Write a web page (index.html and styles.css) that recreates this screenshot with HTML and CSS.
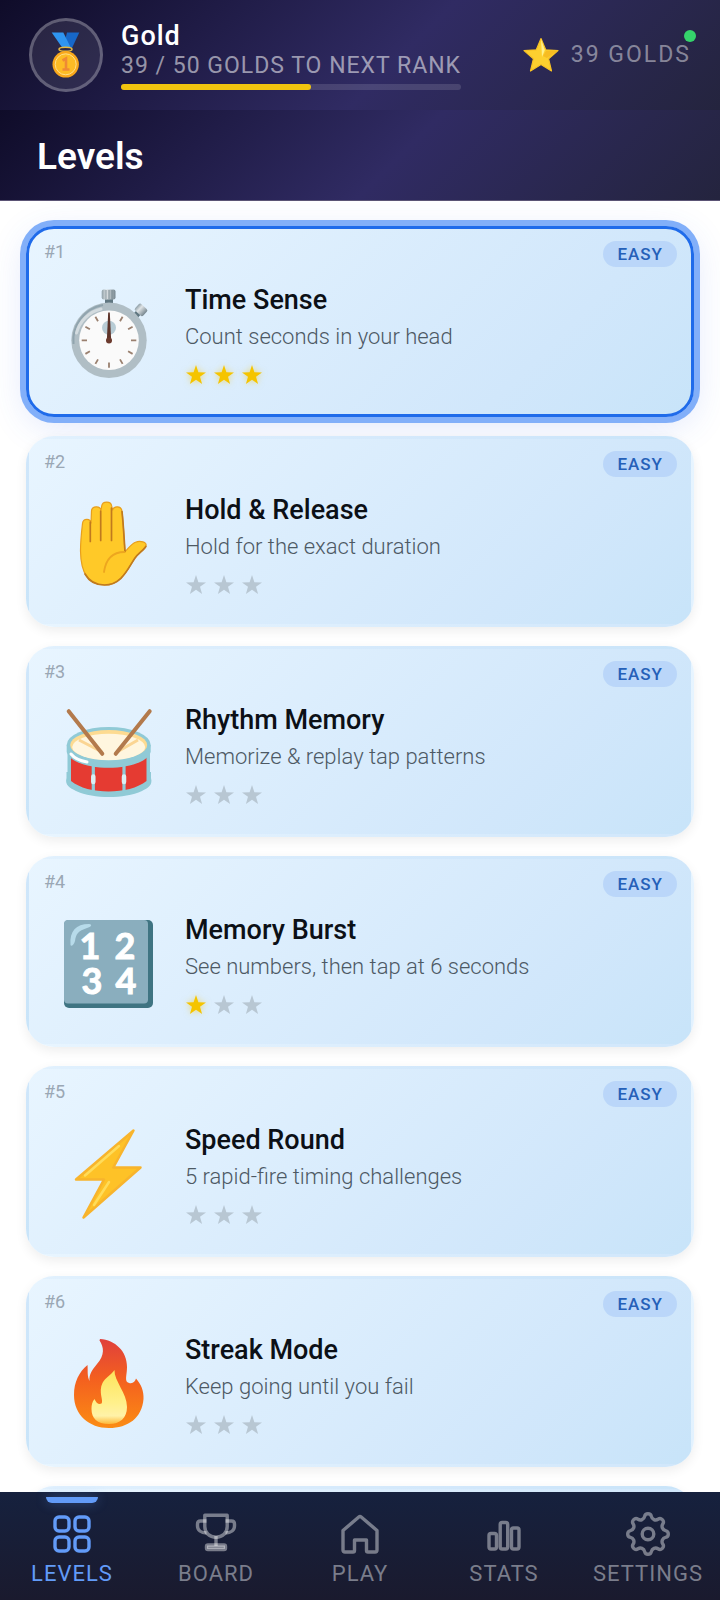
FILE: index.html
```html
<!DOCTYPE html>
<html lang="en">
<head>
<meta charset="utf-8">
<meta name="viewport" content="width=device-width, initial-scale=1">
<title>Levels</title>
<link rel="stylesheet" href="styles.css">
</head>
<body>
<svg class="defs" aria-hidden="true">
  <defs>
    <symbol id="star" viewBox="0 0 20 20"><path d="M10 0 12.400 7.200 20 7.400 14 11.800 16.100 19 10 14.800 3.900 19 6 11.800 0 7.400 7.600 7.200Z"/></symbol>
    <linearGradient id="flame" x1="0" y1="0" x2="0" y2="1"><stop offset="0" stop-color="#e0403c"/><stop offset=".45" stop-color="#f4601f"/><stop offset="1" stop-color="#fb8c14"/></linearGradient>
    <linearGradient id="core" x1="0" y1="0" x2="0" y2="1"><stop offset="0" stop-color="#fde35b"/><stop offset=".6" stop-color="#fff08a"/><stop offset=".85" stop-color="#fff2a8"/><stop offset="1" stop-color="#fdb93a"/></linearGradient>
    <linearGradient id="steel" x1="0" y1="0" x2="1" y2="0"><stop offset="0" stop-color="#8fa0a8"/><stop offset=".35" stop-color="#e0e4e6"/><stop offset="1" stop-color="#76868f"/></linearGradient>
  </defs>
</svg>

<header class="topbar">
  <div class="avatar">
    <svg width="46" height="46" viewBox="0 0 46 46" aria-hidden="true">
      <path d="M24 .5H36.3L29 16H20Z" fill="#1767c8"/>
      <path d="M8.7.5H20.3L28 16H19.5Z" fill="#2f95f0"/>
      <ellipse cx="22.5" cy="17.3" rx="6.5" ry="2" fill="none" stroke="#e9b93f" stroke-width="1.5"/>
      <circle cx="22.7" cy="32.3" r="13.2" fill="#f9a81b"/>
      <circle cx="22.7" cy="32.3" r="10.5" fill="#fdbc25" stroke="#ffe08a" stroke-width="1"/>
      <path d="M19.5 28.5 23 26.5V37M19.5 37.5H26.5" fill="none" stroke="#ee8a35" stroke-width="2.6"/>
    </svg>
  </div>
  <div class="rank">
    <strong class="rank-name">Gold</strong>
    <span class="rank-next" id="rank-next">39 / 50 GOLDS TO NEXT RANK</span>
    <div class="track" role="progressbar" aria-labelledby="rank-next" aria-valuenow="39" aria-valuemin="0" aria-valuemax="50"><div class="fill" style="width:56%"></div></div>
  </div>
  <div class="golds">
    <svg width="36" height="36" viewBox="0 0 36 36" aria-hidden="true">
      <path d="M18 1.5 22.7 12.8 35 13.6 25.6 21.8 28.5 34 18 27.6 7.5 34 10.4 21.8 1 13.6 13.3 12.8Z" fill="#fdd02f" stroke="#f9c324" stroke-width="1.2" stroke-linejoin="round"/>
      <path d="M18 2 21.8 13 19 20Z" fill="#fff08c"/><path d="M34 14 24 21 20 19 23 14Z" fill="#f2ac17" opacity=".55"/>
    </svg>
    <span>39 GOLDS</span>
    <i class="dot"></i>
  </div>
</header>

<div class="titlebar"><h1>Levels</h1></div>

<main class="scroll">
  <ol class="levels">
    <li><a class="card selected" href="#1" aria-current="true">
      <span class="card-top"><span class="num">#1</span><span class="badge">EASY</span></span>
      <span class="card-body">
        <svg class="art" viewBox="0 0 90 90" aria-hidden="true">
          <path d="M42 9H50V16H42Z" fill="#5f7680"/>
          <rect x="38.7" y=".5" width="13.8" height="10" rx="2" fill="url(#steel)"/>
          <path d="M43 1V10M46 1V10M49 1V10" stroke="#71838c" stroke-width=".8"/>
          <g transform="rotate(43 77 22)"><rect x="74" y="24" width="6" height="7" fill="#5f7680"/><rect x="71.5" y="16" width="11" height="9" rx="2" fill="url(#steel)"/></g>
          <circle cx="46" cy="51.3" r="37.7" fill="#b0bec5"/>
          <path d="M10.5 55A36 36 0 0 1 40 16" fill="none" stroke="#90a4ae" stroke-width="2"/>
          <path d="M13.5 44A33 33 0 0 1 38 20" fill="none" stroke="#d3dbdf" stroke-width="3" stroke-linecap="round"/>
          <circle cx="46" cy="51.3" r="29.8" fill="#fafafa"/>
          <circle cx="46" cy="38.7" r="7" fill="#b8ccd5"/>
          <g stroke="#9a806f" stroke-width="1.8">
            <path d="M46 73.5V78.8M18.7 51.3H24M68 51.3H73.3"/>
            <path d="M32.4 27.7 35 32.2M22.4 37.7 26.9 40.3M59.6 27.7 57 32.2M69.6 37.7 65.1 40.3M22.4 64.9 26.9 62.3M32.4 74.9 35 70.4M69.6 64.9 65.1 62.3M59.6 74.9 57 70.4"/>
          </g>
          <path d="M45.2 23.5H46.8L48.2 52H43.8Z" fill="#5d3329"/><circle cx="46" cy="51.5" r="3" fill="#6b3a2e"/>
        </svg>
        <span class="info">
          <strong class="name">Time Sense</strong><span class="desc">Count seconds in your head</span>
          <span class="stars" role="img" aria-label="3 of 3 stars"><svg class="on"><use href="#star"/></svg><svg class="on"><use href="#star"/></svg><svg class="on"><use href="#star"/></svg></span>
        </span>
      </span>
    </a></li>
    <li><a class="card" href="#2">
      <span class="card-top"><span class="num">#2</span><span class="badge">EASY</span></span>
      <span class="card-body">
        <svg class="art" viewBox="0 0 90 90" aria-hidden="true">
          <path d="M17.5 52C17.5 42 18.5 33 19.5 24.5C20 19 27.8 19 28 24.5L28.5 12C28.8 6.5 37.5 6.5 38 11.5L38.7 7C39.5 1.8 48 1.8 48.7 7L49.5 11.5C50.5 6.5 58.5 6.5 59 12.5C60.5 26 61 39 62 52.5C65 50 68 45 72.5 43.2C76.5 41.6 85 42.5 82.7 47.5C81 51 75.5 54 72 59C65 69 59 86 41.5 86C26 86 17.8 75 17.5 52Z" fill="#ffc928" stroke="#e89f1c" stroke-width="1.2"/>
          <path d="M27.3 23V42.5M37.7 12V41.5M48.5 9V41.5M59 12.5C60.5 26 61 39 62 52.5M82.8 47.5C81 51 75.5 54 72 59C65 69 59 86 41.5 86C32 86 26 82 22 75" fill="none" stroke="#c07a1e" stroke-width="1.7" stroke-linecap="round"/>
          <path d="M61.5 53C50 53 43 59 41 73" fill="none" stroke="#eda61f" stroke-width="1.8" stroke-linecap="round"/>
        </svg>
        <span class="info">
          <strong class="name">Hold &amp; Release</strong><span class="desc">Hold for the exact duration</span>
          <span class="stars" role="img" aria-label="0 of 3 stars"><svg><use href="#star"/></svg><svg><use href="#star"/></svg><svg><use href="#star"/></svg></span>
        </span>
      </span>
    </a></li>
    <li><a class="card" href="#3">
      <span class="card-top"><span class="num">#3</span><span class="badge">EASY</span></span>
      <span class="card-body">
        <svg class="art" viewBox="0 0 90 90" aria-hidden="true">
          <path d="M3.5 69C1.500 76 7 79 13 82C31 90 61 90 79 82C85 79 90 76 88 69V63H3.5Z" fill="#90cad6"/>
          <path d="M4.5 38V72C20 88 71 88 87 72V38Z" fill="#90cad6"/>
          <path d="M8 46C26 57 66 57 83.5 46V72C66 86 25 86 8 72Z" fill="#e53b32"/>
          <path d="M30.3 54V83M61 54V83" stroke="#90cad6" stroke-width="3.2"/>
          <path d="M30.3 67.500V73M61 67.500V73" stroke="#d9f0f4" stroke-width="4.500" stroke-linecap="round"/>
          <path d="M3.7 36V43C10 64 81 64 87.7 43V36Z" fill="#90cad6"/>
          <ellipse cx="45.7" cy="36" rx="42" ry="18" fill="#90cad6"/>
          <ellipse cx="45.7" cy="36" rx="38.5" ry="15" fill="#fddb91"/>
          <ellipse cx="45.7" cy="38" rx="36.5" ry="13.2" fill="#fff6df"/>
          <path d="M16 31 39 43M75 31 54 43" stroke="#fbd593" stroke-width="3"/>
          <path d="M8 45C12 50 18 52 24 53" fill="none" stroke="#fff" stroke-width="3" stroke-linecap="round"/>
          <path d="M5.7 2.2 39.3 44.8M86.7 2.2 52.7 44.8" stroke="#b37a4c" stroke-width="4" stroke-linecap="round"/>
        </svg>
        <span class="info">
          <strong class="name">Rhythm Memory</strong><span class="desc">Memorize &amp; replay tap patterns</span>
          <span class="stars" role="img" aria-label="0 of 3 stars"><svg><use href="#star"/></svg><svg><use href="#star"/></svg><svg><use href="#star"/></svg></span>
        </span>
      </span>
    </a></li>
    <li><a class="card" href="#4">
      <span class="card-top"><span class="num">#4</span><span class="badge">EASY</span></span>
      <span class="card-body">
        <svg class="art" viewBox="0 0 90 90" aria-hidden="true">
          <rect x="1" y="1" width="89" height="88" rx="5" fill="#3f7482"/>
          <rect x="1" y="1" width="84" height="83.5" rx="4" fill="#8aaebe"/>
          <path d="M7.500 26C6.500 12 13 5 26 5C30 5.500 28 8 24 9C15 12 13 15 12 22C11 26 8 28 7.500 26Z" fill="#b7dbea"/>
          <g class="digits"><text x="27" y="40">1</text><text x="62" y="40">2</text><text x="29" y="75">3</text><text x="63" y="75">4</text></g>
        </svg>
        <span class="info">
          <strong class="name">Memory Burst</strong><span class="desc">See numbers, then tap at 6 seconds</span>
          <span class="stars" role="img" aria-label="1 of 3 stars"><svg class="on"><use href="#star"/></svg><svg><use href="#star"/></svg><svg><use href="#star"/></svg></span>
        </span>
      </span>
    </a></li>
    <li><a class="card" href="#5">
      <span class="card-top"><span class="num">#5</span><span class="badge">EASY</span></span>
      <span class="card-body">
        <svg class="art" viewBox="0 0 90 90" aria-hidden="true">
          <path d="M70.5 1.5 50.3 38.5H77.5L20.5 88.5 41 50.5H13Z" fill="#fec227" stroke="#f8b42c" stroke-width="2.5" stroke-linejoin="round"/>
          <path d="M56 17 22 46.500" stroke="#ffdc5a" stroke-width="2.500" stroke-linecap="round"/>
          <path d="M46 53 31 76" stroke="#ffdc5a" stroke-width="2.500" stroke-linecap="round"/>
        </svg>
        <span class="info">
          <strong class="name">Speed Round</strong><span class="desc">5 rapid-fire timing challenges</span>
          <span class="stars" role="img" aria-label="0 of 3 stars"><svg><use href="#star"/></svg><svg><use href="#star"/></svg><svg><use href="#star"/></svg></span>
        </span>
      </span>
    </a></li>
    <li><a class="card" href="#6">
      <span class="card-top"><span class="num">#6</span><span class="badge">EASY</span></span>
      <span class="card-body">
        <svg class="art" viewBox="0 0 90 90" aria-hidden="true">
          <path d="M37 0C52 1 64 12 64 28C64 35 62 40 64 43C69 46 72 43 73 39.5C78 45 81 52 80.500 60C79 79 65 89 46 89C26 89 11 76 11 56C11 43 16 33 24.5 26C25 32 24 37 26.500 42C26 35 29 31 34 25C42 16 41 8 36.500 1.500Z" fill="url(#flame)"/>
          <path d="M51.500 31C51 42 64 54 64 68C64 79 57 85 46 85C34 85 28.500 79 28.500 70C28.500 66 29 63 31.500 60C33 64 36 66 38.500 64.500C41 62 35 53 39.500 44C42 39 48 36 51.500 31Z" fill="url(#core)"/>
        </svg>
        <span class="info">
          <strong class="name">Streak Mode</strong><span class="desc">Keep going until you fail</span>
          <span class="stars" role="img" aria-label="0 of 3 stars"><svg><use href="#star"/></svg><svg><use href="#star"/></svg><svg><use href="#star"/></svg></span>
        </span>
      </span>
    </a></li>
    <li><a class="card" href="#7" aria-label="Level 7"></a></li>
  </ol>
</main>

<nav class="tabs">
  <a class="tab active" href="#levels" aria-current="page">
    <svg viewBox="0 0 44 44" aria-hidden="true"><rect x="5" y="5" width="14" height="14" rx="4"/><rect x="25" y="5" width="14" height="14" rx="4"/><rect x="5" y="25" width="14" height="14" rx="4"/><rect x="25" y="25" width="14" height="14" rx="4"/></svg>
    <span>LEVELS</span></a>
  <a class="tab" href="#board">
    <svg viewBox="0 0 44 44" aria-hidden="true"><path d="M10.800 3.200H33.200V14.500C33.200 21 28.500 25.300 22 25.300C15.500 25.300 10.800 21 10.800 14.500Z"/><path d="M12.500 9H6.500Q3.500 9 3.500 12V14C3.500 18 7 21 12.500 21"/><path d="M31.500 9H37.500Q40.500 9 40.500 12V14C40.500 18 37 21 31.500 21"/><path d="M22 24V34"/><rect x="12.500" y="33" width="19" height="4.500" rx="1.500"/><path d="M13 35.200H31"/></svg>
    <span>BOARD</span></a>
  <a class="tab" href="#play">
    <svg viewBox="0 0 44 44" aria-hidden="true"><path d="M5 18.500 20.800 5Q22 4 23.200 5L39 18.500V38Q39 40 37 40H30Q28.500 40 28.500 38.500V28H16.500V38.500Q16.500 40 15 40H7Q5 40 5 38Z"/></svg>
    <span>PLAY</span></a>
  <a class="tab" href="#stats">
    <svg viewBox="0 0 44 44" aria-hidden="true"><rect x="7" y="21.500" width="7.500" height="15.500" rx="2"/><rect x="18.200" y="10.500" width="7.500" height="26.500" rx="2"/><rect x="29.500" y="16" width="7.500" height="21" rx="2"/></svg>
    <span>STATS</span></a>
  <a class="tab" href="#settings">
    <svg viewBox="-22 -22 44 44" aria-hidden="true">
      <path d="M-6-14.400C-4.200-15.150-3.700-16-3.400-17.500C-3-19.500-1.800-20.300 0-20.300C1.800-20.300 3-19.500 3.400-17.500C3.700-16 4.200-15.150 6-14.400C7.800-13.650 8.700-13.930 9.970-14.780C11.670-15.910 13.080-15.630 14.350-14.350C15.630-13.080 15.910-11.670 14.780-9.970C13.930-8.700 13.650-7.800 14.400-6C15.150-4.200 16-3.700 17.500-3.400C19.500-3 20.300-1.800 20.300 0C20.300 1.800 19.500 3 17.500 3.400C16 3.700 15.150 4.200 14.400 6C13.650 7.800 13.930 8.700 14.780 9.970C15.910 11.670 15.630 13.080 14.350 14.350C13.080 15.630 11.670 15.910 9.970 14.780C8.700 13.930 7.800 13.650 6 14.400C4.200 15.150 3.700 16 3.400 17.500C3 19.500 1.800 20.300 0 20.300C-1.800 20.300-3 19.500-3.400 17.500C-3.700 16-4.200 15.150-6 14.400C-7.800 13.650-8.700 13.930-9.970 14.780C-11.670 15.910-13.080 15.630-14.350 14.350C-15.630 13.080-15.910 11.670-14.780 9.970C-13.930 8.700-13.650 7.800-14.400 6C-15.150 4.200-16 3.700-17.500 3.400C-19.500 3-20.300 1.800-20.300 0C-20.300-1.800-19.500-3-17.500-3.400C-16-3.700-15.150-4.200-14.400-6C-13.650-7.800-13.930-8.700-14.780-9.970C-15.910-11.670-15.630-13.080-14.350-14.350C-13.080-15.630-11.670-15.910-9.970-14.780C-8.700-13.930-7.800-13.650-6-14.400Z"/>
      <circle r="5.800"/></svg>
    <span>SETTINGS</span></a>
</nav>
</body>
</html>
```
FILE: styles.css
```css
* { box-sizing: border-box; }

body {
  margin: 0;
  height: 100vh;
  display: flex;
  flex-direction: column;
  background: #fff;
  color: #0c1016;
  font-family: Roboto, "Liberation Sans", sans-serif;
}

a { color: inherit; text-decoration: none; }
svg { display: block; flex: none; }
.defs { position: absolute; width: 0; height: 0; }

.topbar,
.titlebar {
  flex: none;
  background: linear-gradient(135deg, #0f0c29 0%, #302b63 55%, #24243e 100%);
  color: #fff;
}

.topbar {
  display: flex;
  align-items: center;
  padding: 18px 29px;
}

.avatar {
  width: 74px;
  height: 74px;
  display: grid;
  place-items: center;
  border: 3px solid rgba(255, 255, 255, .25);
  border-radius: 50%;
  background: rgba(255, 255, 255, .09);
}

.rank {
  display: flex;
  flex-direction: column;
  margin-left: 18px;
}

.rank-name {
  font-size: 27px;
  line-height: 32px;
  font-weight: 500;
  letter-spacing: 1px;
}

.rank-next {
  font-size: 23px;
  line-height: 28px;
  letter-spacing: 1px;
  color: rgba(255, 255, 255, .55);
}

.track {
  height: 6px;
  margin-top: 4px;
  border-radius: 3px;
  background: rgba(255, 255, 255, .13);
}

.fill { height: 100%; border-radius: 3px; background: #f1c40f; }

.golds {
  position: relative;
  display: flex;
  align-items: center;
  gap: 12px;
  margin-left: auto;
  font-size: 23px;
  line-height: 28px;
  letter-spacing: 2px;
  color: rgba(255, 255, 255, .45);
}

.dot {
  position: absolute;
  top: -7px;
  right: -5px;
  width: 12px;
  height: 12px;
  border-radius: 50%;
  background: #35d36b;
}

.titlebar {
  padding: 26px 37px 22px;
  border-bottom: 1px solid #5b5475;
}

h1 {
  margin: 0;
  font-size: 37px;
  line-height: 42px;
  font-weight: 600;
}

.scroll {
  flex: 1;
  min-height: 0;
  overflow-y: auto;
  scrollbar-width: none;
}

.levels {
  display: grid;
  gap: 19px;
  margin: 0;
  padding: 25px 26px;
  list-style: none;
}

.card {
  display: flex;
  flex-direction: column;
  gap: 16px;
  min-height: 191px;
  padding: 12px 14px 29px 15px;
  border: 3px solid transparent;
  border-radius: 28px;
  background: linear-gradient(135deg, #e8f5ff 0%, #d1e7fb 75%, #c8e4f9 100%);
  box-shadow: 0 4px 12px rgba(0, 0, 0, .07);
}

.selected {
  border-color: #1f6bea;
  box-shadow: 0 0 0 6px #82aff9, 0 8px 36px rgba(60, 100, 230, .17);
}

.card-top {
  display: flex;
  justify-content: space-between;
}

.num {
  font-size: 18px;
  line-height: 22px;
  color: #9aa7b4;
}

.badge {
  padding: 0 14px;
  border-radius: 13px;
  background: #bad6f9;
  color: #2560b8;
  font-size: 17px;
  line-height: 26px;
  font-weight: 500;
  letter-spacing: 1px;
}

.card-body {
  display: flex;
  align-items: center;
  gap: 32px;
  padding-left: 19px;
}

.art { width: 90px; height: 90px; overflow: visible; }

.digits {
  fill: #fff;
  stroke: #fff;
  stroke-width: 1;
  font: 700 36px Lato, sans-serif;
  text-anchor: middle;
}

.info { display: flex; flex-direction: column; }

.name {
  font-size: 27px;
  line-height: 34px;
  font-weight: 500;
}

.desc {
  margin-top: 6px;
  font-size: 22px;
  line-height: 28px;
  font-weight: 300;
  color: #4d5964;
}

.stars {
  display: flex;
  gap: 8px;
  margin-top: 14px;
  padding-left: 1px;
}

.stars svg {
  width: 20px;
  height: 20px;
  overflow: visible;
  fill: #b8c7d3;
}

.stars .on {
  fill: #f5c400;
  filter: drop-shadow(0 0 3px rgba(245, 196, 0, .5));
}

.tabs {
  flex: none;
  display: grid;
  grid-template-columns: repeat(5, 1fr);
  background: linear-gradient(#16213e, #1a1a2e);
}

.tab {
  position: relative;
  display: flex;
  flex-direction: column;
  align-items: center;
  gap: 4px;
  padding: 20px 0 12px;
  color: #7a7d8b;
  font-size: 22px;
  line-height: 28px;
  letter-spacing: 1px;
}

.tab svg {
  width: 44px;
  height: 44px;
  fill: none;
  stroke: rgba(255, 255, 255, .42);
  stroke-width: 3.4;
  stroke-linejoin: round;
}

.active { color: #629bf8; }
.active svg { stroke: #629bf8; }

.active::before {
  content: "";
  position: absolute;
  top: 5px;
  width: 52px;
  height: 6px;
  border-radius: 0 0 6px 6px;
  background: #629bf8;
  box-shadow: 0 0 12px rgba(98, 155, 248, .4);
}
```
